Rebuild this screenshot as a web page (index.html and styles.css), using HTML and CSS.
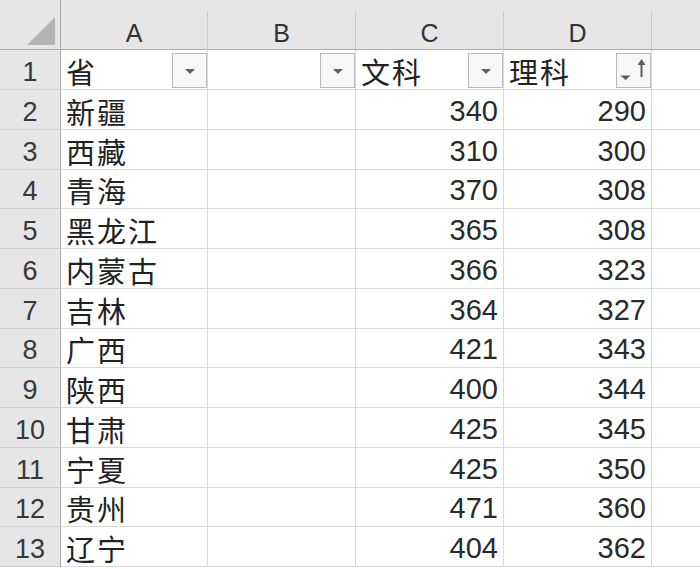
FILE: index.html
```html
<!DOCTYPE html>
<html lang="zh">
<head>
<meta charset="utf-8">
<title>Sheet</title>
<link rel="stylesheet" href="styles.css">
</head>
<body>
<div class="sheet">
  <div class="corner"><span class="tri"></span></div>
  <div class="colh">A</div>
  <div class="colh">B</div>
  <div class="colh">C</div>
  <div class="colh">D</div>
  <div class="colh last"></div>

  <div class="rowh">1</div>
  <div class="cell txt flt"><span>省</span><span class="btn"><i class="dd"></i></span></div>
  <div class="cell txt flt"><span></span><span class="btn"><i class="dd"></i></span></div>
  <div class="cell txt flt"><span>文科</span><span class="btn"><i class="dd"></i></span></div>
  <div class="cell txt flt"><span>理科</span><span class="btn sort"><svg width="33" height="33" viewBox="0 0 33 33"><path d="M3.5 21.5 H13.5 L8.5 26 Z" fill="#5a5a5a"/><path d="M24.5 23 V9" stroke="#5a5a5a" stroke-width="2" fill="none"/><path d="M20.5 11 L24.5 5 L28.5 11 Z" fill="#5a5a5a"/></svg></span></div>
  <div class="cell last"></div>

  <div class="rowh">2</div><div class="cell txt">新疆</div><div class="cell"></div><div class="cell num">340</div><div class="cell num">290</div><div class="cell last"></div>
  <div class="rowh">3</div><div class="cell txt">西藏</div><div class="cell"></div><div class="cell num">310</div><div class="cell num">300</div><div class="cell last"></div>
  <div class="rowh">4</div><div class="cell txt">青海</div><div class="cell"></div><div class="cell num">370</div><div class="cell num">308</div><div class="cell last"></div>
  <div class="rowh">5</div><div class="cell txt">黑龙江</div><div class="cell"></div><div class="cell num">365</div><div class="cell num">308</div><div class="cell last"></div>
  <div class="rowh">6</div><div class="cell txt">内蒙古</div><div class="cell"></div><div class="cell num">366</div><div class="cell num">323</div><div class="cell last"></div>
  <div class="rowh">7</div><div class="cell txt">吉林</div><div class="cell"></div><div class="cell num">364</div><div class="cell num">327</div><div class="cell last"></div>
  <div class="rowh">8</div><div class="cell txt">广西</div><div class="cell"></div><div class="cell num">421</div><div class="cell num">343</div><div class="cell last"></div>
  <div class="rowh">9</div><div class="cell txt">陕西</div><div class="cell"></div><div class="cell num">400</div><div class="cell num">344</div><div class="cell last"></div>
  <div class="rowh">10</div><div class="cell txt">甘肃</div><div class="cell"></div><div class="cell num">425</div><div class="cell num">345</div><div class="cell last"></div>
  <div class="rowh">11</div><div class="cell txt">宁夏</div><div class="cell"></div><div class="cell num">425</div><div class="cell num">350</div><div class="cell last"></div>
  <div class="rowh">12</div><div class="cell txt">贵州</div><div class="cell"></div><div class="cell num">471</div><div class="cell num">360</div><div class="cell last"></div>
  <div class="rowh">13</div><div class="cell txt">辽宁</div><div class="cell"></div><div class="cell num">404</div><div class="cell num">362</div><div class="cell last"></div>
</div>
</body>
</html>
```

FILE: styles.css
```css
html, body {
  margin: 0;
  padding: 0;
  background: #ffffff;
  overflow: hidden;
}

.sheet {
  display: grid;
  grid-template-columns: 61px 147px 148px 148px 148px 1fr;
  grid-template-rows: 50px 40px 40px 40px 39px 40px 40px 40px 39px 40px 40px 40px 39px 40px;
  width: 700px;
  height: 569px;
  font-family: "Noto Sans CJK SC", "Noto Sans", sans-serif;
}

.corner {
  background: #e6e6e6;
  border-bottom: 1px solid #ababab;
  border-right: 1px solid #ababab;
  box-sizing: border-box;
  position: relative;
}

.tri {
  position: absolute;
  left: 27px;
  top: 17px;
  width: 0;
  height: 0;
  border-style: solid;
  border-width: 0 0 28px 28px;
  border-color: transparent transparent #b4b4b4 transparent;
}

.colh {
  background: #e6e6e6 linear-gradient(#c8c8c8, #c8c8c8) no-repeat right 12px / 1px 100%;
  border-bottom: 1px solid #ababab;
  box-sizing: border-box;
  font-family: "Liberation Sans", "Noto Sans", sans-serif;
  font-size: 25px;
  color: #333333;
  display: flex;
  justify-content: center;
  align-items: flex-end;
  padding-bottom: 3px;
  line-height: 1;
  padding-right: 1px;
}

.colh.last {
  background: #e6e6e6;
}

.rowh {
  background: #e6e6e6;
  border-right: 1px solid #ababab;
  border-bottom: 1px solid #d0d0d0;
  box-sizing: border-box;
  font-family: "Liberation Sans", "Noto Sans", sans-serif;
  font-size: 27px;
  color: #383838;
  display: flex;
  justify-content: center;
  align-items: flex-end;
  padding-bottom: 3px;
  line-height: 1;
}

.cell {
  border-right: 1px solid #d9d9d9;
  border-bottom: 1px solid #d9d9d9;
  box-sizing: border-box;
  color: #222222;
  display: flex;
  align-items: flex-end;
  min-width: 0;
  line-height: 1;
}

.cell.last {
  border-right: none;
}

.txt {
  font-family: "Noto Sans CJK SC", sans-serif;
  font-size: 29px;
  letter-spacing: 2px;
  padding-left: 5px;
  padding-bottom: 3px;
  white-space: nowrap;
}

.num {
  font-family: "Liberation Sans", "Noto Sans", sans-serif;
  font-size: 29px;
  color: #2a2a2a;
  justify-content: flex-end;
  padding-right: 5px;
  padding-bottom: 3px;
}

.flt {
  justify-content: space-between;
  padding-bottom: 1px;
}

.flt > span:first-child {
  padding-bottom: 2px;
}

.btn {
  width: 35px;
  height: 35px;
  box-sizing: border-box;
  border: 1px solid #b9b9b9;
  background: #f6f7f9;
  display: flex;
  align-items: center;
  justify-content: center;
  flex: none;
}

.dd {
  width: 0;
  height: 0;
  border-style: solid;
  border-width: 5px 5px 0 5px;
  border-color: #606060 transparent transparent transparent;
  margin-top: 1px;
}

.sort svg {
  display: block;
}
```
